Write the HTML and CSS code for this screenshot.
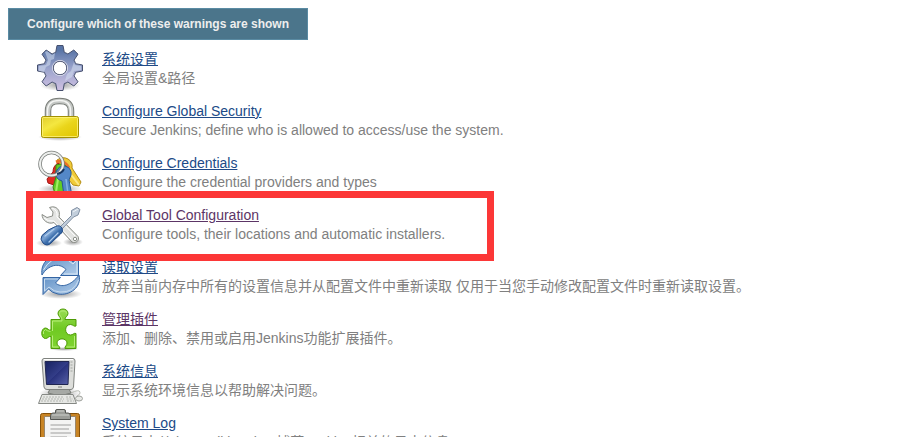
FILE: index.html
```html
<!DOCTYPE html>
<html lang="zh-CN">
<head>
<meta charset="utf-8">
<title>Manage Jenkins</title>
<link rel="stylesheet" href="styles.css">
</head>
<body>
<main>
  <button class="configure" type="button">Configure which of these warnings are shown</button>
  <ul class="links">
    <li class="item">
      <svg class="icon" viewBox="0 0 48 48" aria-hidden="true">
        <defs>
          <linearGradient id="gear" x1="0" y1="0" x2="0" y2="1"><stop offset="0.1" stop-color="#5874a6"/><stop offset="0.5" stop-color="#99a3cb"/><stop offset="1" stop-color="#cfc0e2"/></linearGradient>
          <radialGradient id="shade"><stop offset="0" stop-color="#000" stop-opacity=".4"/><stop offset="1" stop-color="#000" stop-opacity="0"/></radialGradient>
        </defs>
        <ellipse cx="24" cy="41" rx="20" ry="6" fill="url(#shade)"/>
        <path d="M19.7 8.5L21 1.5H27L28.3 8.5Q30 8.8 31.9 10L37.8 6L42 10.2L38 16.1Q39.2 18 39.5 19.7L46.5 21V27L39.5 28.3Q39.2 30 38 31.9L42 37.8L37.8 42L31.9 38Q30 39.2 28.3 39.5L27 46.5H21L19.7 39.5Q18 39.2 16.1 38L10.2 42L6 37.8L10 31.9Q8.8 30 8.5 28.3L1.5 27V21L8.5 19.7Q8.8 18 10 16.1L6 10.2L10.2 6L16.1 10Q18 8.8 19.7 8.5ZM24 17a7 7 0 1 0 0 14a7 7 0 1 0 0-14Z" fill="url(#gear)" stroke="#46506e" stroke-linejoin="round"/>
        <path d="M9 8l2-1 5 4 3-2-1 6-3 1-1 5-4 2-2 5-5-1v-5l7-1 2-5zM38 18l1 3 6 1v4l-7 1-2 6-7 4 2-7 4-3z" fill="#d4def0" opacity=".55"/>
        <circle cx="24" cy="24" r="7.6" fill="none" stroke="#dde0ef"/>
        <circle cx="24" cy="24" r="6.7" fill="#fff" stroke="#555c7a"/>
      </svg>
      <div class="text"><a href="#configure">系统设置</a><p>全局设置&amp;路径</p></div>
    </li>
    <li class="item">
      <svg class="icon" viewBox="0 0 48 48" aria-hidden="true">
        <defs><linearGradient id="brass" x1="0" y1="0" x2="1" y2="1"><stop offset="0" stop-color="#e0cc2c"/><stop offset=".35" stop-color="#f4e740"/><stop offset=".55" stop-color="#ead51b"/><stop offset="1" stop-color="#e0c400"/></linearGradient></defs>
        <ellipse cx="24" cy="41" rx="22" ry="4" fill="url(#shade)"/>
        <path d="M12 22V15C12 7.500 16 5 23.500 5S35 7.500 35 15V22" fill="none" stroke="#777b76" stroke-width="6.500"/>
        <path d="M12 22V15C12 7.500 16 5 23.500 5S35 7.500 35 15V22" fill="none" stroke="#c4c7c4" stroke-width="4.500"/>
        <path d="M11.500 21V15C11.500 7.500 16 4.500 23.500 4.500S34.500 7.500 34.500 15V21" fill="none" stroke="#f3f4f2" stroke-width="1.500"/>
        <rect x="5.500" y="20.500" width="37" height="21" rx="2" fill="url(#brass)" stroke="#a39000"/>
        <rect x="6.500" y="21.500" width="35" height="19" rx="1" fill="none" stroke="#fff37c" opacity=".8"/>
      </svg>
      <div class="text"><a href="#security">Configure Global Security</a><p>Secure Jenkins; define who is allowed to access/use the system.</p></div>
    </li>
    <li class="item">
      <svg class="icon" viewBox="0 0 48 48" aria-hidden="true">
        <ellipse cx="24" cy="41" rx="22" ry="5" fill="url(#shade)"/>
        <path d="M21 12q6-4 11-1 5 3 4 9l9 14-2 4-6-1-12-15z" fill="#f0cb38" stroke="#b38c13"/>
        <path d="M33 24l10 13" stroke="#fbe785" stroke-width="2"/>
        <path d="M22 15q-5 3-5 9l-6 7 1 4 6 2 4-2 11-12z" fill="#e02b24" stroke="#a31616"/>
        <path d="M20 14q8-3 13 6" fill="none" stroke="#e97027" stroke-width="3"/>
        <path d="M20 17q9-3 12 4l-3 11-2 14h-8l-2-7 3-10z" fill="#62cc24" stroke="#388d14"/>
        <path d="M22 31l-2 13" stroke="#a2ef66" stroke-width="2"/>
        <path d="M20 24q3-7 9-6 7 2 6 9l-2 5 3 16h-8l-2-15q-7-2-6-9z" fill="#5488c8" stroke="#285893"/>
        <path d="M30 31l2 15" stroke="#84b1e4" stroke-width="1.500"/>
        <circle cx="15.500" cy="16" r="11.500" fill="none" stroke="#777b78" stroke-width="3.500"/>
        <circle cx="15.500" cy="16" r="11.500" fill="none" stroke="#eceeec" stroke-width="2"/>
        <path d="M21 26q5-1 7-5" fill="none" stroke="#173661" stroke-width="2"/>
      </svg>
      <div class="text"><a href="#credentials">Configure Credentials</a><p>Configure the credential providers and types</p></div>
    </li>
    <li class="item marked">
      <svg class="icon" viewBox="0 0 48 48" aria-hidden="true">
        <defs><linearGradient id="grip" x1="0" y1="0" x2="1" y2="1"><stop offset="0" stop-color="#3465a4"/><stop offset=".4" stop-color="#7ba3d3"/><stop offset=".55" stop-color="#3b6dab"/><stop offset="1" stop-color="#204a87"/></linearGradient></defs>
        <ellipse cx="13" cy="43" rx="13" ry="4" fill="url(#shade)"/><ellipse cx="37" cy="42" rx="10" ry="4" fill="url(#shade)"/>
        <path d="M13.500 7.500C20 5 25 10 23 17L42 36.500C44 40 40 44 36 42L18 22.500C12 25 6 20 6 14.500L11 17.500L16.500 16L17 12Z" fill="#e3e4e2" stroke="#8b8e88" stroke-linejoin="round"/>
        <path d="M16 8q6 2 5 9l18 19M8 18q4 4 10 3l17 18" fill="none" stroke="#fff"/>
        <circle cx="39" cy="39" r="1.700" fill="#fff" stroke="#8b8e88"/>
        <path d="M24 27L35.500 15.500V10.500L41 7.500L44 9.500L42 15L37.500 17L26 29Z" fill="#c2cedb" stroke="#8190a3" stroke-linejoin="round"/>
        <path d="M37 12l5-3" stroke="#eef3f7"/>
        <path d="M19.500 26.500Q24 24.500 26 28Q28 32 24 34.500L15 43Q11 47 7 43Q3.500 39 6 35.500Q12 29 19.500 26.500Z" fill="url(#grip)" stroke="#204a87"/>
        <path d="M9 36l9-7M13 42l9-9" stroke="#afcbeb" stroke-width="1.300" stroke-linecap="round"/>
      </svg>
      <div class="text"><a class="visited" href="#tools">Global Tool Configuration</a><p>Configure tools, their locations and automatic installers.</p></div>
    </li>
    <li class="item">
      <svg class="icon" viewBox="0 0 48 48" aria-hidden="true">
        <defs><linearGradient id="arrow" x1="0" y1="0" x2="1" y2="1"><stop offset="0" stop-color="#5f8fc5"/><stop offset="1" stop-color="#b2cdea"/></linearGradient></defs>
        <ellipse cx="25" cy="42" rx="21" ry="5" fill="url(#shade)"/>
        <path d="M6 23C4 10 15 1 28 4Q34 5 37 10L42.500 5V23.500H24.500L30 17.500C23 10 12 13 6 23Z" fill="url(#arrow)" stroke="#3465a4" stroke-linejoin="round"/>
        <path d="M7.500 18Q14 6 26 6 32 7 37 12L41 8V22H28" fill="none" stroke="#d8e7f5"/>
        <path d="M43 23C46 35 34 44 22 42Q16 41 12.500 37L7 42.500V25.500H24.500L19.500 31C25 36 35 34 43 23Z" fill="url(#arrow)" stroke="#3465a4" stroke-linejoin="round"/>
        <path d="M42.500 28Q38 41 24 40 18 40 13 35L8.500 39V27H22" fill="none" stroke="#c8dcf0"/>
      </svg>
      <div class="text"><a href="#reload">读取设置</a><p>放弃当前内存中所有的设置信息并从配置文件中重新读取 仅用于当您手动修改配置文件时重新读取设置。</p></div>
    </li>
    <li class="item">
      <svg class="icon" viewBox="0 0 48 48" aria-hidden="true">
        <defs><linearGradient id="piece" x1="0" y1="0" x2="0" y2="1"><stop offset="0" stop-color="#9add55"/><stop offset=".5" stop-color="#70c922"/><stop offset="1" stop-color="#80d431"/></linearGradient></defs>
        <ellipse cx="28" cy="45" rx="15" ry="2" fill="url(#shade)"/>
        <path d="M15 15.500H24.500C25 13 22 12.500 22 9.500C22 3.500 32 3.500 32 9.500C32 12.500 28.500 13 29 15.500H40V22C38 23 37 20.500 34.500 20.500C28 20.500 28 31 34.500 31C37 31 38 28.500 40 29.500V44.500H29C28.500 42 31 42 31 39C31 33.500 21 33.500 21 39C21 42 24 42 24 44.500H15V32.500C12.500 32 12 34.500 9.500 34.500C4.500 34.500 4.500 24 9.500 24C12 24 12.500 27 15 26Z" fill="url(#piece)" stroke="#4e9a06" stroke-linejoin="round"/>
        <path d="M16.500 27V17H26C26 12 23.500 12.500 23.500 9.500C23.500 6 30.500 6 30.500 9.500M16.500 31.500V43H22.500M30.500 43H38.500V32M14.500 27.500Q11 27 9.500 25.500Q6.500 27 7.500 30" fill="none" stroke="#b7ee79"/>
      </svg>
      <div class="text"><a class="visited" href="#plugins">管理插件</a><p>添加、删除、禁用或启用Jenkins功能扩展插件。</p></div>
    </li>
    <li class="item">
      <svg class="icon" viewBox="0 0 48 48" aria-hidden="true">
        <defs><linearGradient id="screen" x1="0" y1="0" x2="1" y2="1"><stop offset="0" stop-color="#172260"/><stop offset=".5" stop-color="#333d88"/><stop offset=".52" stop-color="#29327d"/><stop offset="1" stop-color="#5962a9"/></linearGradient></defs>
        <ellipse cx="24" cy="38" rx="21" ry="7" fill="url(#shade)"/>
        <path d="M35 37Q43 33 44 36Q45 38 41 40" fill="none" stroke="#babdb6"/>
        <path d="M14 33H33L35 37Q24 41 12 37Z" fill="#a6a9a5" stroke="#777a75"/>
        <path d="M8 2.500H37Q39 2.500 39 5L37.500 31Q37 33.500 35 33.500H11Q8.500 33.500 8 31L6 5Q6 2.500 8 2.500Z" fill="#dddedb" stroke="#80837f"/>
        <path d="M8 3.500H37" stroke="#fff"/>
        <path d="M9 5.500H33L32 28.500H10.500Z" fill="url(#screen)" stroke="#202651"/>
        <path d="M34.500 6h2M34.500 9h2M34.500 12h2M34.500 15h2" stroke="#a3a6a1"/>
        <path d="M22 31h4" stroke="#7c7f7b"/>
        <path d="M6 38.500H37L40.500 47.500H2.500Z" fill="#e6e7e4" stroke="#858884"/>
        <path d="M7 41H28M6 43H28M5 45H27M30 41H36M30.500 43H37M31 45H38" stroke="#b4b7b2" stroke-dasharray="2 1"/>
        <ellipse cx="43" cy="42.500" rx="3.500" ry="2.500" fill="#e8e9e6" stroke="#9fa29d"/>
      </svg>
      <div class="text"><a href="#info">系统信息</a><p>显示系统环境信息以帮助解决问题。</p></div>
    </li>
    <li class="item">
      <svg class="icon" viewBox="0 0 48 48" aria-hidden="true">
        <rect x="4.500" y="5.500" width="39" height="41" rx="2" fill="#c88424" stroke="#855008"/>
        <rect x="8.500" y="8.500" width="31" height="36" fill="#f4f4f3" stroke="#9b876b"/>
        <path d="M14.500 17H35M14.500 21H33M14.500 25H35M14.500 29H31M14.500 33H35" stroke="#bbb" stroke-width="1.500"/>
        <path d="M19.500 5V3Q19.500 1.500 21 1.500H28Q29.500 1.500 29.500 3V5H32Q34.500 5 34.500 7.500V11.500H14.500V7.500Q14.500 5 17 5Z" fill="#9b9d98" stroke="#555753"/>
        <path d="M16 7H33M21 3H28" stroke="#cdcfca"/>
      </svg>
      <div class="text"><a href="#log">System Log</a><p>系统日志从 java.util.logging 捕获Jenkins相关的日志信息。</p></div>
    </li>
  </ul>
</main>
</body>
</html>
```
FILE: styles.css
```css
html {
  overflow: hidden;
}

body {
  margin: 8px;
  background: #fff;
  color: #808080;
  font: 14px/19px "Liberation Sans", "Noto Sans CJK SC", sans-serif;
}

.configure {
  display: block;
  height: 32px;
  padding: 0 18px;
  border: 1px solid #5a8ba3;
  background: #4b758b;
  color: #eee;
  font: bold 12px/16px "Liberation Sans", sans-serif;
}

.links {
  display: grid;
  gap: 4px;
  margin: 4px 0 0;
  padding: 0 0 0 28px;
  list-style: none;
}

.item {
  position: relative;
  display: flex;
  gap: 18px;
  height: 48px;
}

.icon {
  flex: none;
  width: 48px;
  height: 48px;
}

.text {
  padding-top: 6px;
}

.text a {
  display: block;
  width: fit-content;
  color: #204a87;
}

.text a.visited {
  color: #5c3566;
}

.text p {
  margin: 0;
}

.marked::after {
  content: "";
  position: absolute;
  z-index: 1;
  top: -9px;
  left: -10px;
  box-sizing: border-box;
  width: 468px;
  height: 70px;
  border: 7px solid #fc3737;
}
```
